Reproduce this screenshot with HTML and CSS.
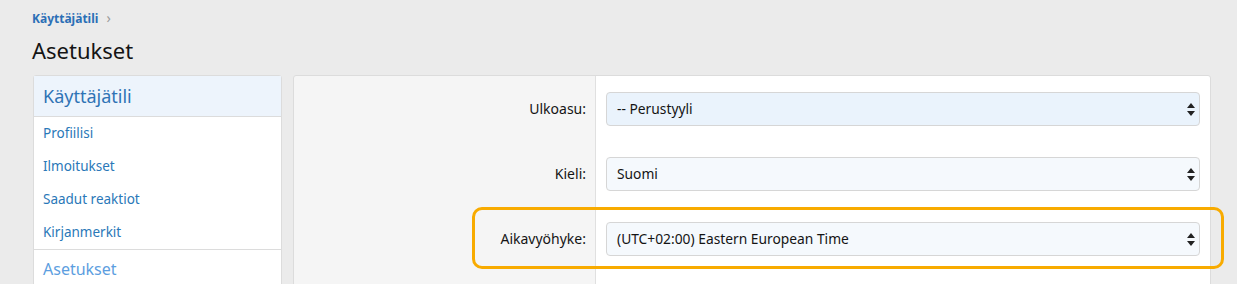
FILE: index.html
```html
<!DOCTYPE html>
<html>
<head>
	<title>Asetukset</title>
	<link rel="stylesheet" href="styles.css">
</head>
<body>
	<div class="page">
		<div class="crumbs">
			<a href="#">Käyttäjätili</a>
			<span class="sep">&rsaquo;</span>
		</div>
		<h1>Asetukset</h1>

		<div class="layout">
			<div class="side">
				<div class="side_head">Käyttäjätili</div>
				<ul class="side_list">
					<li><a href="#">Profiilisi</a></li>
					<li><a href="#">Ilmoitukset</a></li>
					<li><a href="#">Saadut reaktiot</a></li>
					<li><a href="#">Kirjanmerkit</a></li>
				</ul>
				<ul class="side_list side_list2">
					<li><a class="active" href="#">Asetukset</a></li>
				</ul>
			</div>

			<div class="main">
				<div class="row">
					<div class="label">Ulkoasu:</div>
					<div class="field">
						<div class="sel sel_first">
							<select><option>-- Perustyyli</option></select>
							<svg class="arr" width="8" height="13" viewBox="0 0 8 13"><path d="M4 0 L8 5 L0 5 Z M0 8 L8 8 L4 13 Z" fill="#222"/></svg>
						</div>
					</div>
				</div>
				<div class="row">
					<div class="label">Kieli:</div>
					<div class="field">
						<div class="sel">
							<select><option>Suomi</option></select>
							<svg class="arr" width="8" height="13" viewBox="0 0 8 13"><path d="M4 0 L8 5 L0 5 Z M0 8 L8 8 L4 13 Z" fill="#222"/></svg>
						</div>
					</div>
				</div>
				<div class="row row_mark">
					<div class="label">Aikavyöhyke:</div>
					<div class="field">
						<div class="sel">
							<select><option>(UTC+02:00) Eastern European Time</option></select>
							<svg class="arr" width="8" height="13" viewBox="0 0 8 13"><path d="M4 0 L8 5 L0 5 Z M0 8 L8 8 L4 13 Z" fill="#222"/></svg>
						</div>
					</div>
					<div class="mark"></div>
				</div>
				<div class="row row_last">
					<div class="label"></div>
					<div class="field"></div>
				</div>
			</div>
		</div>
	</div>
</body>
</html>
```

FILE: styles.css
```css
html, body {
	margin: 0;
	padding: 0;
	background: #ebebeb;
	font-family: "Noto Sans", "Open Sans", sans-serif;
	color: #141414;
	overflow: hidden;
}

.page {
	padding: 8px 26px 0 32px;
}

.crumbs {
	height: 20px;
	font-size: 12px;
	line-height: 20px;
}

.crumbs a {
	color: #2b6fb6;
	font-weight: bold;
	text-decoration: none;
}

.crumbs .sep {
	color: #9a9a9a;
	margin-left: 5px;
	font-size: 14px;
}

h1 {
	margin: 5px 0 0 0;
	font-size: 22px;
	font-weight: normal;
	line-height: 34px;
	height: 42px;
}

.layout {
	display: flex;
	gap: 11px;
	align-items: flex-start;
}

/* sidebar */
.side {
	width: 247px;
	margin-left: 1px;
	background: #fff;
	border: 1px solid #dcdcdc;
	border-radius: 3px;
}

.side_head {
	height: 40px;
	line-height: 40px;
	padding-left: 9px;
	background: #edf4fc;
	border-bottom: 1px solid #dcdcdc;
	color: #2f73b5;
	font-size: 18px;
}

.side_list {
	list-style: none;
	margin: 0;
	padding: 0;
}

.side_list li a {
	display: block;
	height: 33px;
	line-height: 33px;
	padding-left: 9px;
	font-size: 13.5px;
	color: #2a78b8;
	text-decoration: none;
}

.side_list2 {
	border-top: 1px solid #dcdcdc;
}

.side_list2 li a.active {
	height: 38px;
	line-height: 38px;
	font-size: 16px;
	color: #5c9ee0;
}

/* main block */
.main {
	flex: 1;
	background: #fff;
	border: 1px solid #dcdcdc;
	border-radius: 3px;
	padding-top: 16px;
	background-image: linear-gradient(to right, #f5f5f5 301px, #e0e0e0 301px, #e0e0e0 302px, #fff 302px);
}

.row {
	position: relative;
	display: flex;
	align-items: center;
	height: 33px;
	margin-bottom: 32px;
}

.row_last {
	margin-bottom: 0;
}

.label {
	width: 292px;
	padding-right: 10px;
	text-align: right;
	font-size: 14px;
}

.field {
	flex: 1;
	padding: 0 10px 0 10px;
}

.sel {
	position: relative;
}

.sel select {
	display: block;
	width: 100%;
	height: 34px;
	-webkit-appearance: none;
	appearance: none;
	border: 1px solid #d6d6d6;
	border-radius: 4px;
	background: #f5f9fd;
	padding: 0 10px;
	font-family: "Noto Sans", "Open Sans", sans-serif;
	font-size: 13.8px;
	color: #141414;
}

.sel_first select {
	background: #eaf3fc;
}

.sel .arr {
	position: absolute;
	right: 5px;
	top: 11px;
}

.mark {
	position: absolute;
	left: 178px;
	right: -14px;
	top: -15px;
	height: 56px;
	border: 3px solid #f8ab00;
	border-radius: 10px;
	pointer-events: none;
}
```
